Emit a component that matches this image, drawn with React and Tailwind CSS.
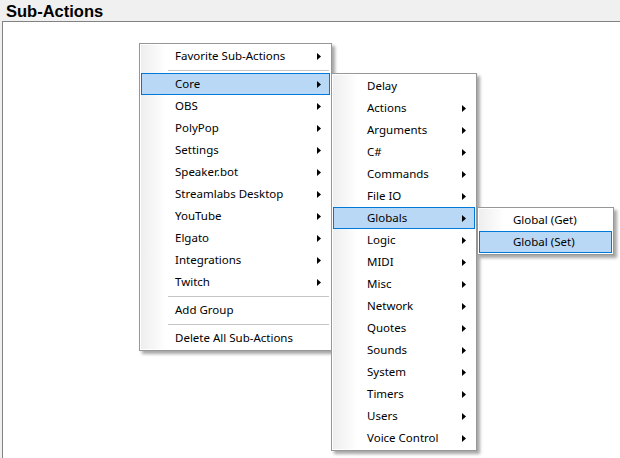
import React from "react";

const Arrow = () => (
  <svg width="4" height="7" viewBox="0 0 4 7" className="block">
    <polygon points="0,0 4,3.5 0,7" fill="#000" />
  </svg>
);

function Menu({ left, top, width, items }) {
  return (
    <div
      className="absolute border border-[#979797] bg-white p-px shadow-[3px_3px_3px_rgba(0,0,0,0.35)]"
      style={{ left, top, width }}
    >
      <div className="flex flex-col bg-[linear-gradient(90deg,#eeeeee,#ffffff_25px)]">
        {items.map((it, i) =>
          it.sep ? (
            <div key={i} className="h-[6px] pl-[27px] pr-px flex items-center">
              <div className="h-px w-full bg-[#c5c5c5]" />
            </div>
          ) : (
            <div
              key={i}
              className={
                "h-[22px] flex items-center justify-between border pl-[33px] pr-[8px] " +
                (it.hl ? "border-[#0078d7] bg-[#b9d8f5]" : "border-transparent")
              }
            >
              <span className="leading-none">{it.label}</span>
              {it.arrow && <Arrow />}
            </div>
          )
        )}
      </div>
    </div>
  );
}

const m1 = [
  { label: "Favorite Sub-Actions", arrow: true },
  { sep: true },
  { label: "Core", arrow: true, hl: true },
  { label: "OBS", arrow: true },
  { label: "PolyPop", arrow: true },
  { label: "Settings", arrow: true },
  { label: "Speaker.bot", arrow: true },
  { label: "Streamlabs Desktop", arrow: true },
  { label: "YouTube", arrow: true },
  { label: "Elgato", arrow: true },
  { label: "Integrations", arrow: true },
  { label: "Twitch", arrow: true },
  { sep: true },
  { label: "Add Group" },
  { sep: true },
  { label: "Delete All Sub-Actions" },
];

const m2 = [
  { label: "Delay" },
  { label: "Actions", arrow: true },
  { label: "Arguments", arrow: true },
  { label: "C#", arrow: true },
  { label: "Commands", arrow: true },
  { label: "File IO", arrow: true },
  { label: "Globals", arrow: true, hl: true },
  { label: "Logic", arrow: true },
  { label: "MIDI", arrow: true },
  { label: "Misc", arrow: true },
  { label: "Network", arrow: true },
  { label: "Quotes", arrow: true },
  { label: "Sounds", arrow: true },
  { label: "System", arrow: true },
  { label: "Timers", arrow: true },
  { label: "Users", arrow: true },
  { label: "Voice Control", arrow: true },
];

const m3 = [{ label: "Global (Get)" }, { label: "Global (Set)", hl: true }];

export default function App() {
  return (
    <div
      className="relative w-[620px] h-[458px] overflow-hidden bg-[#f0f0f0] flex flex-col text-[11.5px] text-black"
      style={{ fontFamily: '"Noto Sans", "Open Sans", sans-serif' }}
    >
      <div className="h-[21px] shrink-0 pl-[6px] flex items-end">
        <span
          className="font-bold text-[16.5px] leading-[19px] text-black"
          style={{ fontFamily: '"Liberation Sans", Arial, sans-serif' }}
        >
          Sub-Actions
        </span>
      </div>
      <div className="flex-1 ml-[2px] border-l border-t border-[#828282] bg-white" />
      <Menu left={139} top={43} width={193} items={m1} />
      <Menu left={331} top={73} width={146} items={m2} />
      <Menu left={477} top={207} width={137} items={m3} />
    </div>
  );
}
